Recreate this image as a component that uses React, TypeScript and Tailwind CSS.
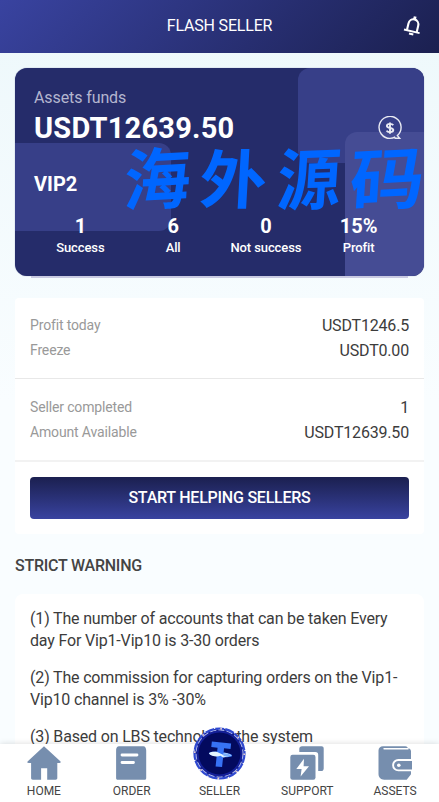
import type { ReactNode } from "react";

interface RowProps {
  label: string;
  value: string;
}

const stats = [
  { value: "1", label: "Success" },
  { value: "6", label: "All" },
  { value: "0", label: "Not success" },
  { value: "15%", label: "Profit" },
];

const warnings = [
  "(1) The number of accounts that can be taken Every day For Vip1-Vip10 is 3-30 orders",
  "(2) The commission for capturing orders on the Vip1-Vip10 channel is 3% -30%",
  "(3) Based on LBS technology, the system",
];

const BellIcon = () => (
  <svg width="20" height="22" viewBox="0 0 20 22" fill="none" stroke="#fff">
    <g transform="rotate(13 10 11)">
      <path d="M5 16V9.5a5 5.3 0 0 1 10 0V16" strokeWidth="2.1" />
      <path d="M2 16.4h16" strokeWidth="1.9" />
      <path d="M10 1.2v3" strokeWidth="2.8" />
      <path d="M7.8 19.2h4.4" strokeWidth="2" />
    </g>
  </svg>
);

const DollarIcon = () => (
  <svg width="24" height="24" viewBox="0 0 24 24" fill="none" stroke="#e9eaf3">
    <path
      d="M16.5 22.3H21.7L19.4 19.6A11 11 0 1 0 12 22.4C14 22.4 15.8 21.8 17.2 20.9"
      strokeWidth="1.4"
    />
    <path
      d="M15.2 9.2C14.7 8.3 13.5 7.9 12 7.9c-1.9 0-3.1.7-3.1 2 0 2.8 6.4 1.4 6.4 4.2 0 1.4-1.4 2.1-3.3 2.1-1.7 0-2.9-.5-3.4-1.6M12 6.4v11.4"
      strokeWidth="1.9"
    />
  </svg>
);

const HomeIcon = () => (
  <svg width="34" height="34" viewBox="0 0 34 34" fill="#768eae">
    <path d="M17 .3 33.3 15.2c.8.8.4 1.8-.7 1.8h-2.3v15c0 1.2-.5 1.7-1.7 1.7H20.2V22.2h-6.1v11.5H5.8c-1.2 0-1.7-.5-1.7-1.7V17H1.500C.4 17 0 16 .8 15.2Z" />
  </svg>
);

const OrderIcon = () => (
  <svg width="34" height="34" viewBox="0 0 34 34" className="relative -left-px">
    <path
      d="M5 .2h24.5c1.5 0 2.7 2 2.7 4.5v27.5c0 .9-.6 1.5-1.5 1.5H3.6c-.9 0-1.5-.6-1.5-1.5V4C2.1 1.5 3.3.2 5 .2Z"
      fill="#768eae"
    />
    <path d="M8 9h15M8 16.5h11.5" stroke="#fff" strokeWidth="2.8" strokeLinecap="round" />
  </svg>
);

const SupportIcon = () => (
  <svg width="34" height="34" viewBox="0 0 34 34" fill="#768eae">
    <path d="M12 .2h19.5c1.3 0 2.2.9 2.2 2.2v20c0 1.6-1.1 2.6-2.5 2.6h-3V8.7c0-1.9-.9-2.7-2.7-2.7H9.3V2.8C9.3 1.2 10.4.2 12 .2Z" />
    <rect x=".3" y="8.7" width="25.2" height="25" rx="2.2" />
    <path d="M14 12.8 6.3 23h5.3l-1 7.5L19 20.3h-5.4Z" fill="#fff" />
  </svg>
);

const AssetsIcon = () => (
  <svg width="34" height="34" viewBox="0 0 34 34">
    <path
      d="M5 .3h22.3c1.5 0 2.3.7 2.6 2 2 .2 3.1 1.4 3.1 3.3v22.6l-4.3 5.5H6.2C2.8 33.7.5 31.2.5 28V4.5C.5 2 2.3.3 5 .3Z"
      fill="#768eae"
    />
    <path d="M6 2.800h24" stroke="#fff" strokeWidth="1.4" strokeLinecap="round" />
    <path d="M35 14H20.3a5.2 5.2 0 0 0 0 10.4H35" fill="#768eae" stroke="#fff" strokeWidth="1.9" />
    <circle cx="20.8" cy="19.2" r="1.8" fill="#fff" />
  </svg>
);

const TetherIcon = () => (
  <svg width="53" height="53" viewBox="0 0 52 52" className="shrink-0">
    <circle cx="26" cy="26" r="24.5" fill="#151d82" />
    <circle cx="26" cy="26" r="24.4" fill="none" stroke="#2f49d0" strokeWidth="2.4" strokeDasharray="9 1" />
    <circle cx="26" cy="26" r="23" fill="none" stroke="#a9b4ee" strokeWidth="1" strokeDasharray="6 2.2" />
    <circle cx="26" cy="26" r="24.3" fill="none" stroke="#eacfc9" strokeWidth="1.6" strokeDasharray="1.6 17.5" />
    <circle cx="26" cy="26" r="21.4" fill="#030a5e" stroke="#14209a" strokeWidth="1.6" />
    <g transform="rotate(6 26 27)">
      <path d="M17.2 15h19v5.5h-6.4V39h-6.4V20.5h-6.2Z" fill="#3772f5" />
      <ellipse cx="27" cy="26.8" rx="11.5" ry="2.5" fill="#3474f4" />
      <path d="M15.5 26.8c2 3 9 3 11.5 1.4l3 1.2 8-2.6c-2-1.5-5-2-8-2v2.2l-6.5-2.2c-3.5 0-6 .5-8 2Z" fill="#e4f5ff" />
      <path d="M30 25.2c4 0 7 .8 7 1.6s-3 1.5-7 1.6Z" fill="#79aefa" />
    </g>
  </svg>
);

const Row = ({ label, value }: RowProps) => (
  <div className="flex h-[25px] items-center justify-between">
    <span className="relative -top-px text-sm tracking-[-0.15px] text-[#999]">{label}</span>
    <span className="text-base tracking-[-0.18px] text-[#3c3c3c]">{value}</span>
  </div>
);

const NavItem = ({ label, children }: { label: string; children: ReactNode }) => (
  <a href="#" className="flex flex-1 flex-col items-center pt-[2px]">
    <span className="flex h-[34px] items-end justify-center">{children}</span>
    <span className="mt-[3px] text-xs leading-4 text-[#444]">{label}</span>
  </a>
);

const AssetsCard = () => (
  <section className="relative mx-[15px] mt-[15px] h-[208px] rounded-xl bg-[#252c6a] text-white shadow-[0_0_1px_#6c719e]">
    <div className="absolute inset-0 overflow-hidden rounded-xl">
      <div className="absolute top-0 -right-4 h-[95px] w-[142px] rounded-xl bg-[#373f88]" />
      <div className="absolute top-[75px] -left-4 h-[88px] w-[172px] rounded-xl bg-[#373f88]" />
      <div className="absolute top-[64px] -right-4 h-[160px] w-[95px] rounded-xl bg-[#454c94]" />
    </div>
    <div className="absolute -bottom-0.5 left-4 right-4 h-0.5 bg-[#c9cae2]" />
    <div className="relative flex h-full flex-col pt-5">
      <div className="flex items-end justify-between pl-[19px] pr-[22px]">
        <div>
          <p className="text-base leading-5 tracking-[-0.1px] text-[#b4b6cf]">Assets funds</p>
          <p className="mt-1 text-[29px] font-bold leading-8 tracking-[0.22px]">USDT12639.50</p>
        </div>
        <span className="mb-1">
          <DollarIcon />
        </span>
      </div>
      <p className="mt-[28px] pl-[19px] text-xl font-bold leading-6">VIP2</p>
      <div className="mt-[18px] grid grid-cols-4 px-[19px] text-center">
        {stats.map((e) => (
          <div key={e.label} className="whitespace-nowrap">
            <div className="text-xl font-bold leading-6">{e.value}</div>
            <div className="mt-px text-[13px] font-medium leading-[18px] tracking-[-0.1px]">{e.label}</div>
          </div>
        ))}
      </div>
    </div>
    <div className="pointer-events-none absolute top-[71px] left-[109px] flex gap-[9px] font-['Noto_Sans_CJK_SC',sans-serif] text-[67px] font-bold leading-[72px] text-[#0066ff]">
      <span className="-skew-x-6 -rotate-3">海</span>
      <span className="-skew-x-3 scale-y-95">外</span>
      <span className="-skew-x-6 -rotate-2 scale-x-95">源</span>
      <span className="relative left-0.5 -skew-x-6 -rotate-3 scale-x-112">码</span>
    </div>
  </section>
);

const App = () => {
  return (
    <div className="flex h-[802px] w-[439px] flex-col overflow-hidden bg-linear-to-b from-[#edf8fb] via-[#f9fdff] to-[#f9fdff] font-['Roboto',sans-serif]">
      <header className="flex h-[53px] shrink-0 items-center bg-linear-[135deg] from-[#3943a0] to-[#1b2050] px-4 pb-0.5 text-white">
        <span className="w-5" />
        <h1 className="flex-1 text-center text-base tracking-[-0.18px]">FLASH SELLER</h1>
        <BellIcon />
      </header>

      <main className="min-h-0 flex-1 overflow-hidden">
        <AssetsCard />

        <section className="mx-[15px] mt-[22px] rounded bg-white">
          <div className="h-[81px] border-b border-[#e8e8e8] px-[15px] pt-[15px]">
            <Row label="Profit today" value="USDT1246.5" />
            <Row label="Freeze" value="USDT0.00" />
          </div>
          <div className="h-[83px] border-b-2 border-[#f2f2f2] px-[15px] pt-4">
            <Row label="Seller completed" value="1" />
            <Row label="Amount Available" value="USDT12639.50" />
          </div>
          <div className="p-[15px]">
            <button className="h-[42px] w-full rounded bg-linear-to-b from-[#1b2050] to-[#3943a0] text-base font-medium tracking-[-0.23px] text-white">
              START HELPING SELLERS
            </button>
          </div>
        </section>

        <h2 className="mx-[15px] mt-5 text-base font-medium tracking-[-0.23px] text-[#444]">STRICT WARNING</h2>

        <section className="mx-[15px] mt-4 h-60 rounded-lg bg-white px-[15px] pt-[14px] text-base leading-[22px] tracking-[-0.17px] text-[#3c3c3c]">
          {warnings.map((e, i) => (
            <p key={i} className="mb-[15px]">
              {e}
            </p>
          ))}
        </section>
      </main>

      <nav className="relative flex h-[58px] shrink-0 bg-white shadow-[0_0_6px_rgba(0,0,0,0.15)]">
        <NavItem label="HOME">
          <HomeIcon />
        </NavItem>
        <NavItem label="ORDER">
          <OrderIcon />
        </NavItem>
        <NavItem label="SELLER">
          <TetherIcon />
        </NavItem>
        <NavItem label="SUPPORT">
          <SupportIcon />
        </NavItem>
        <NavItem label="ASSETS">
          <AssetsIcon />
        </NavItem>
      </nav>
    </div>
  );
};

export default App;
